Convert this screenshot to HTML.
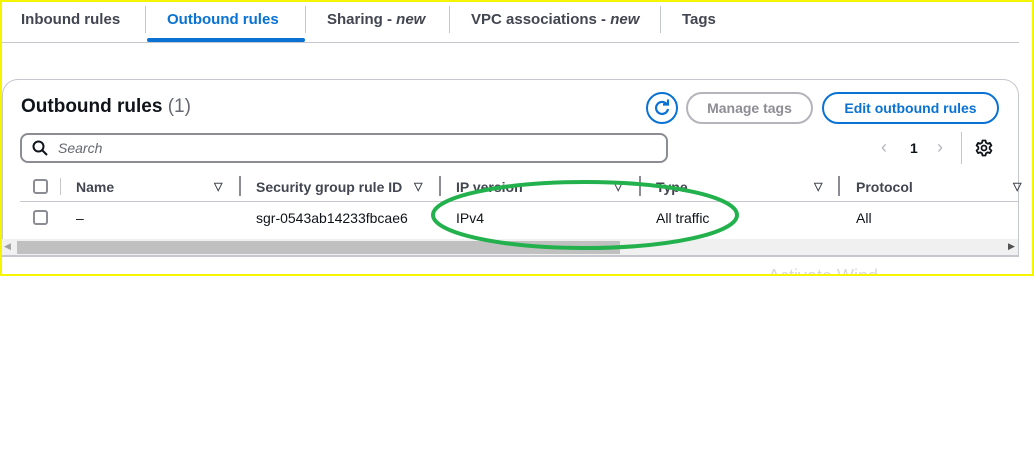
<!DOCTYPE html><html><head><style>
*{margin:0;padding:0;box-sizing:border-box}
body{width:1034px;height:460px;background:#fff;font-family:"Liberation Sans",sans-serif;position:relative;overflow:hidden;color:#0f141a}
.a{position:absolute;white-space:nowrap}
.tab{font-size:15px;font-weight:bold;color:#424650;top:11px}
.sep{position:absolute;width:1px;background:#c6c6cd}
.th{font-size:14px;font-weight:bold;color:#424650;top:179px}
.td{font-size:14px;color:#0f141a;top:210px}
.cb{position:absolute;width:15px;height:15px;border:2px solid #8c8c94;border-radius:3px}
.tri{position:absolute;font-size:11px;color:#424650;font-weight:bold}
</style></head><body>
<div class="a" style="left:0;top:0;width:1034px;height:276px;border:2px solid #f5f500"></div>
<div class="a tab" style="left:21px">Inbound rules</div>
<div class="sep" style="left:145px;top:6px;height:27px"></div>
<div class="a tab" style="left:167px;color:#0972d3">Outbound rules</div>
<div class="a" style="left:147px;top:38px;width:158px;height:4px;background:#0972d3;border-radius:2px"></div>
<div class="sep" style="left:305px;top:6px;height:27px"></div>
<div class="a tab" style="left:327px">Sharing - <i>new</i></div>
<div class="sep" style="left:449px;top:6px;height:27px"></div>
<div class="a tab" style="left:471px">VPC associations - <i>new</i></div>
<div class="sep" style="left:660px;top:6px;height:27px"></div>
<div class="a tab" style="left:682px">Tags</div>
<div class="a" style="left:2px;top:42px;width:1017px;height:1px;background:#c6c6cd"></div>
<div class="a" style="left:2px;top:79px;width:1017px;height:178px;border:1px solid #c6c6cd;border-radius:16px 16px 0 0;border-bottom:2px solid #c6c6cd"></div>
<div class="a" style="left:21px;top:96px;font-size:19px;font-weight:bold">Outbound rules <span style="font-weight:normal;color:#656871">(1)</span></div>
<div class="a" style="left:646px;top:92px;width:32px;height:32px;border:2px solid #0972d3;border-radius:50%"></div>
<svg class="a" style="left:652px;top:98px" width="20" height="20" viewBox="0 0 20 20"><path d="M15 6.5A6 6 0 1 0 16 11" fill="none" stroke="#0972d3" stroke-width="2.2"/><path d="M11 6.5h5v-5" fill="none" stroke="#0972d3" stroke-width="2.2"/></svg>
<div class="a" style="left:686px;top:92px;width:127px;height:32px;border:2px solid #b4b4bb;border-radius:16px;color:#8d8d94;font-weight:bold;font-size:14px;text-align:center;line-height:28px">Manage tags</div>
<div class="a" style="left:822px;top:92px;width:177px;height:32px;border:2px solid #0972d3;border-radius:16px;color:#0972d3;font-weight:bold;font-size:14px;text-align:center;line-height:28px">Edit outbound rules</div>
<div class="a" style="left:20px;top:133px;width:648px;height:30px;border:2px solid #8c8c94;border-radius:8px"></div>
<svg class="a" style="left:32px;top:140px" width="16" height="16" viewBox="0 0 16 16"><circle cx="6.5" cy="6.5" r="5" fill="none" stroke="#0f141a" stroke-width="2"/><path d="M10 10l5 5" stroke="#0f141a" stroke-width="2"/></svg>
<div class="a" style="left:58px;top:140px;font-size:14px;font-style:italic;color:#656871">Search</div>
<div class="a" style="left:881px;top:137px;font-size:18px;color:#b4b4bb">‹</div>
<div class="a" style="left:910px;top:140px;font-size:14px;font-weight:bold">1</div>
<div class="a" style="left:937px;top:137px;font-size:18px;color:#b4b4bb">›</div>
<div class="sep" style="left:961px;top:132px;height:32px"></div>
<svg class="a" style="left:975px;top:139px" width="18" height="18" viewBox="0 0 18 18"><circle cx="9" cy="9" r="2.5" fill="none" stroke="#0f141a" stroke-width="1.8"/><path d="M7.5 1.5h3l.5 2.2 1.8 1 2.1-.8 1.5 2.6-1.7 1.5v2l1.7 1.5-1.5 2.6-2.1-.8-1.8 1-.5 2.2h-3l-.5-2.2-1.8-1-2.1.8-1.5-2.6 1.7-1.5v-2L1.6 6.5l1.5-2.6 2.1.8 1.8-1z" fill="none" stroke="#0f141a" stroke-width="1.8" stroke-linejoin="round"/></svg>
<div class="cb" style="left:33px;top:179px"></div>
<div class="sep" style="left:60px;top:178px;height:17px"></div>
<div class="a th" style="left:76px">Name</div><div class="tri" style="left:214px;top:180px">▽</div>
<div class="sep" style="left:239px;top:176px;height:20px;width:2px;background:#8c8c94"></div>
<div class="a th" style="left:256px">Security group rule ID</div><div class="tri" style="left:414px;top:180px">▽</div>
<div class="sep" style="left:439px;top:176px;height:20px;width:2px;background:#8c8c94"></div>
<div class="a th" style="left:456px">IP version</div><div class="tri" style="left:614px;top:180px">▽</div>
<div class="sep" style="left:639px;top:176px;height:20px;width:2px;background:#8c8c94"></div>
<div class="a th" style="left:656px">Type</div><div class="tri" style="left:814px;top:180px">▽</div>
<div class="sep" style="left:838px;top:176px;height:20px;width:2px;background:#8c8c94"></div>
<div class="a th" style="left:856px">Protocol</div><div class="tri" style="left:1013px;top:180px">▽</div>
<div class="a" style="left:20px;top:201px;width:998px;height:1px;background:#c6c6cd"></div>
<div class="cb" style="left:33px;top:210px"></div>
<div class="a td" style="left:76px">–</div>
<div class="a td" style="left:256px">sgr-0543ab14233fbcae6</div>
<div class="a td" style="left:456px">IPv4</div>
<div class="a td" style="left:656px">All traffic</div>
<div class="a td" style="left:856px">All</div>
<div class="a" style="left:2px;top:239px;width:1016px;height:16px;background:#f0f0f0"></div>
<div class="a" style="left:17px;top:241px;width:603px;height:13px;background:#c0c0c0"></div>
<div class="a" style="left:4px;top:241px;font-size:9px;color:#a0a0a0">◀</div>
<div class="a" style="left:1008px;top:241px;font-size:9px;color:#505050">▶</div>
<svg class="a" style="left:430px;top:178px" width="314" height="76"><ellipse cx="155" cy="37" rx="152" ry="33" fill="none" stroke="#22b14c" stroke-width="4"/></svg>
<div class="a" style="left:768px;top:266px;width:140px;height:8px;overflow:hidden"><div style="font-size:18px;color:#d8d8d8">Activate Wind</div></div>
</body></html>
